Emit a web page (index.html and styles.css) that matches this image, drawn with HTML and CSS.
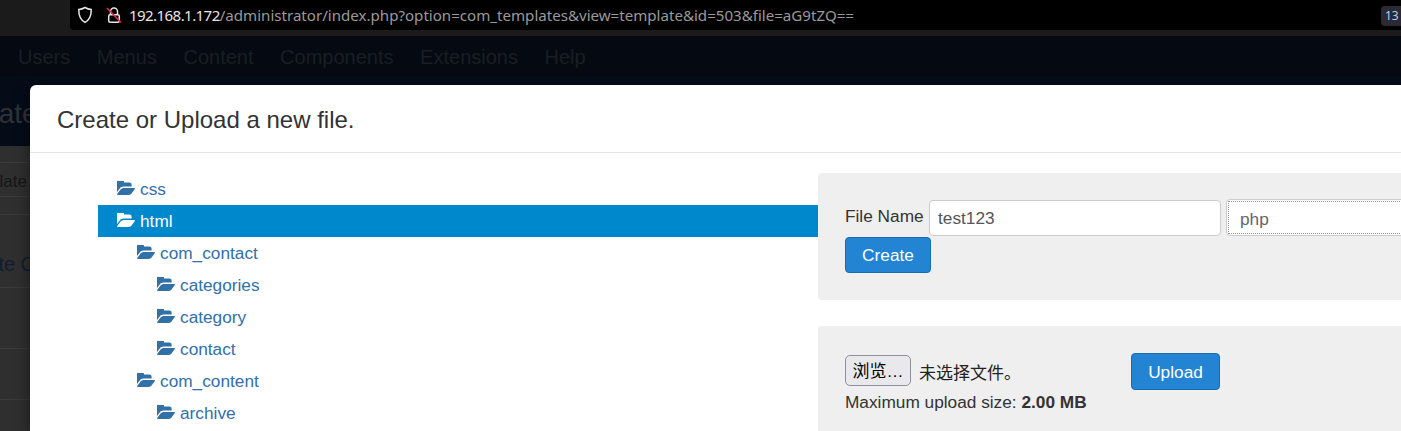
FILE: index.html
```html
<!DOCTYPE html>
<html lang="zh">
<head>
  <meta charset="UTF-8">
  <title>Create or Upload a new file</title>
  <link rel="stylesheet" href="styles.css">
</head>
<body>
  <!-- icono de carpeta -->
  <svg class="sprite" aria-hidden="true">
    <symbol id="folder" viewBox="0 256 1815 1280" preserveAspectRatio="none">
      <path fill="currentColor" d="M1815 952q0 31-31 66l-336 396q-43 51-120.5 86.5t-143.5 35.5h-1088q-34 0-60.5-13t-26.5-43q0-31 31-66l336-396q43-51 120.5-86.5t143.5-35.5h1088q34 0 60.5 13t26.5 43zm-343-344v160h-832q-94 0-197 47.5t-164 119.5l-337 396-5 6q0-4-.5-12.5t-.5-12.5v-960q0-92 66-158t158-66h320q92 0 158 66t66 158v32h544q92 0 158 66t66 158z"/>
    </symbol>
  </svg>

  <!-- barra del navegador -->
  <div class="toolbar">
    <div class="urlbar">
      <svg class="url-icon" width="16" height="18" viewBox="0 0 16 18">
        <path d="M8 1.5c2 1.2 4 1.8 6.2 1.9.2 5.600-1.800 10.600-6.200 13-4.400-2.400-6.400-7.400-6.200-13C4 3.300 6 2.700 8 1.500z" fill="none" stroke="#e8e8e8" stroke-width="1.500"/>
      </svg>
      <svg class="url-icon lock" width="16" height="18" viewBox="0 0 16 18">
        <path d="M4.500 8V5.500a3.500 3.500 0 0 1 7 0V8" fill="none" stroke="#e8e8e8" stroke-width="1.500"/>
        <rect x="2.700" y="8.700" width="10.600" height="7.600" rx="1.500" fill="none" stroke="#e8e8e8" stroke-width="1.500"/>
        <path d="M1 2l14 14.500" stroke="#e22850" stroke-width="1.600"/>
      </svg>
      <div class="url"><span class="host">192.168.1.172</span>/administrator/index.php?option=com_templates&amp;view=template&amp;id=503&amp;file=aG9tZQ==</div>
      <div class="url-badge">13</div>
    </div>
  </div>

  <!-- menu de joomla -->
  <nav class="navbar">
    <a>Users</a>
    <a>Menus</a>
    <a>Content</a>
    <a>Components</a>
    <a>Extensions</a>
    <a>Help</a>
  </nav>

  <!-- pagina oscurecida detras del modal -->
  <div class="page">
    <div class="page-title"><h1>Template</h1></div>
    <div class="page-tabs"><span>Template</span></div>
    <div class="page-gap"></div>
    <div class="page-row page-row-create"><span>Create C</span></div>
    <div class="page-row page-row-empty"></div>
    <div class="page-row page-row-last"></div>
  </div>

  <!-- modal -->
  <div class="modal">
    <div class="modal-header">
      <h3>Create or Upload a new file.</h3>
    </div>
    <div class="modal-body">
      <ul class="tree">
        <li class="depth-0"><svg class="folder"><use href="#folder"/></svg>css</li>
        <li class="depth-0 selected"><svg class="folder"><use href="#folder"/></svg>html</li>
        <li class="depth-1"><svg class="folder"><use href="#folder"/></svg>com_contact</li>
        <li class="depth-2"><svg class="folder"><use href="#folder"/></svg>categories</li>
        <li class="depth-2"><svg class="folder"><use href="#folder"/></svg>category</li>
        <li class="depth-2"><svg class="folder"><use href="#folder"/></svg>contact</li>
        <li class="depth-1"><svg class="folder"><use href="#folder"/></svg>com_content</li>
        <li class="depth-2"><svg class="folder"><use href="#folder"/></svg>archive</li>
      </ul>

      <div class="panels">
        <div class="well well-create">
          <div class="create-row">
            <label>File Name</label>
            <div class="input">test123</div>
            <div class="select"><span>php</span></div>
          </div>
          <button class="btn btn-create">Create</button>
        </div>

        <div class="well well-upload">
          <div class="upload-row">
            <div class="file-picker">
              <span class="file-btn">浏览…</span>
              <span class="file-text">未选择文件。</span>
            </div>
            <button class="btn btn-upload">Upload</button>
          </div>
          <p class="max-size">Maximum upload size: <strong>2.00 MB</strong></p>
        </div>
      </div>
    </div>
  </div>
</body>
</html>
```

FILE: styles.css
```css
* {
  box-sizing: border-box;
}

html, body {
  height: 431px;
}

body {
  margin: 0;
  overflow: hidden;
  background-color: #2f2f2f;
  font-family: "Liberation Sans", Arial, "Noto Sans CJK SC", sans-serif;
  font-size: 17.25px;
  color: #333;
  position: relative;
}

.sprite {
  display: none;
}

/* Barra del navegador */
.toolbar {
  height: 36px;
  padding-left: 70px;
  background-color: #1b1b1b;
}

.urlbar {
  height: 30px;
  display: flex;
  align-items: center;
  background-color: #000;
  border-bottom-left-radius: 4px;
  padding-left: 7px;
}

.url-icon {
  flex: none;
}

.url-icon.lock {
  margin-left: 13px;
}

.url {
  margin-left: 7px;
  font-family: "Noto Sans", sans-serif;
  font-size: 15.1px;
  color: #9a9a9a;
  white-space: nowrap;
  flex: 1;
}

.host {
  color: #e6e6e6;
  letter-spacing: -0.6px;
}

.url-badge {
  width: 20px;
  height: 20px;
  margin-top: 1px;
  padding-left: 4px;
  border-radius: 4px 0 0 4px;
  background-color: #2b2a33;
  color: #a9d4f5;
  font-family: "Noto Sans", sans-serif;
  font-size: 12px;
  line-height: 20px;
  overflow: hidden;
}

/* Menu superior */
.navbar {
  height: 41px;
  display: flex;
  align-items: center;
  gap: 26.6px;
  padding: 2px 0 0 18px;
  background-color: #050a12;
  border-bottom: 1px solid #070d17;
  font-size: 20px;
  color: #1a1e24;
}

/* Pagina detras del modal */
.page-title {
  height: 69px;
  padding-top: 21px;
  background-color: #050c18;
  overflow: hidden;
}

.page-title h1 {
  margin: 0 0 0 -76px;
  font-size: 28px;
  font-weight: normal;
  color: #2f3136;
}

.page-tabs {
  height: 35px;
  margin-top: 16px;
  padding-top: 9px;
  border-top: 1px solid #3a3a3a;
  border-bottom: 1px solid #3a3a3a;
  font-size: 17px;
  color: #161616;
  white-space: nowrap;
  overflow: hidden;
}

.page-tabs span {
  margin-left: -42px;
}

.page-gap {
  height: 18px;
  border-bottom: 1px solid #3a3a3a;
}

.page-row {
  border-bottom: 1px solid #3a3a3a;
}

.page-row-create {
  height: 73px;
  padding-top: 38px;
  font-size: 20px;
  color: #101d30;
  white-space: nowrap;
  overflow: hidden;
}

.page-row-create span {
  margin-left: -45px;
}

.page-row-empty {
  height: 61px;
}

.page-row-last {
  height: 51px;
}

/* Modal */
.modal {
  position: absolute;
  left: 30px;
  top: 85px;
  width: 1500px;
  height: 346px;
  background-color: #fff;
  border-radius: 6px 0 0 0;
  box-shadow: 0 5px 15px rgba(0, 0, 0, 0.5);
}

.modal-header {
  height: 68px;
  padding: 20px 27px 0;
  border-bottom: 1px solid #e5e5e5;
}

.modal-header h3 {
  margin: 0;
  font-size: 24px;
  font-weight: normal;
  line-height: 30px;
  color: #333;
}

.modal-body {
  display: flex;
  height: 278px;
  padding: 20px 0 0 68px;
  overflow: hidden;
}

/* Arbol de carpetas */
.tree {
  width: 720px;
  margin: 0;
  padding: 0;
  list-style: none;
  color: #3270a8;
}

.tree li {
  height: 32px;
  padding-top: 1px;
  display: flex;
  align-items: center;
}

.tree .selected {
  background-color: #0088cc;
  color: #fff;
}

.depth-0 {
  padding-left: 19px;
}

.depth-1 {
  padding-left: 39px;
}

.depth-2 {
  padding-left: 59px;
}

.folder {
  width: 18px;
  height: 14px;
  margin-right: 5px;
  margin-top: -3px;
  flex: none;
}

/* Paneles de la derecha */
.panels {
  width: 700px;
}

.well {
  background-color: #efefef;
  border-radius: 4px;
  padding: 0 27px;
}

.well-create {
  height: 127px;
  padding-top: 26px;
}

.well-upload {
  height: 120px;
  margin-top: 26px;
  padding-top: 27px;
}

.create-row {
  display: flex;
  align-items: flex-start;
  height: 38px;
}

.create-row label {
  flex: none;
  width: 84px;
  padding-top: 7px;
}

.input {
  flex: none;
  width: 292px;
  height: 36px;
  margin-top: 1px;
  padding: 7px 8px;
  background-color: #fff;
  border: 1px solid #ccc;
  border-radius: 4px;
  color: #555;
}

.select {
  flex: none;
  width: 300px;
  height: 37px;
  margin-left: 5px;
  padding: 1px;
  background-color: #fff;
  border: 1px solid #ccc;
  border-radius: 4px;
  color: #666;
}

.select span {
  display: block;
  height: 33px;
  padding: 7px 0 0 11px;
  border: 1px dotted #999;
  border-right: 0;
}

.btn {
  padding: 0;
  background-color: #2384d3;
  border: 1px solid #1a6cb0;
  border-radius: 4px;
  color: #fff;
  font-family: inherit;
  font-size: 17.25px;
}

.btn-create {
  display: block;
  width: 86px;
  height: 36px;
}

.upload-row {
  display: flex;
  align-items: flex-start;
  height: 37px;
}

.file-picker {
  width: 286px;
  display: flex;
  align-items: center;
  gap: 8px;
  height: 31px;
  margin-top: 2px;
}

.file-btn {
  width: 66px;
  height: 31px;
  background-color: #e9e9ed;
  border: 1px solid #8f8f9d;
  border-radius: 5px;
  color: #000;
  font-size: 17px;
  line-height: 31px;
  text-align: center;
  white-space: nowrap;
}

.file-text {
  padding-top: 1px;
  color: #222;
  font-size: 17px;
}

.btn-upload {
  width: 89px;
  height: 37px;
  padding-top: 1px;
}

.max-size {
  margin: 1px 0 0;
  line-height: 22px;
}
```
